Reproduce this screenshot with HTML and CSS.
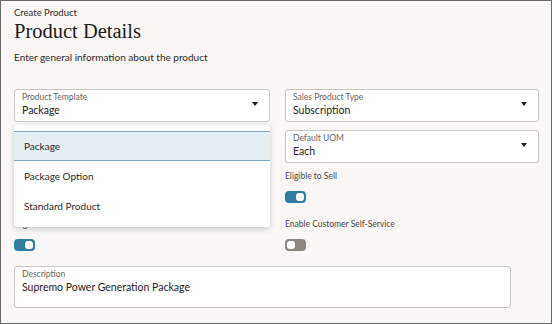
FILE: index.html
```html
<!DOCTYPE html>
<html lang="en">
<head>
  <meta charset="UTF-8" />
  <meta name="viewport" content="width=device-width, initial-scale=1.0"/>
  <title>Create Product</title>
  <link rel="stylesheet" href="styles.css">
</head>
<body>

  <div class="page">
    <div class="crumb">Create Product</div>
    <h1 class="title">Product Details</h1>
    <p class="intro">Enter general information about the product</p>

    <div class="form-grid">
      <div class="col">
        <div class="field select-field">
          <div class="field-label">Product Template</div>
          <div class="field-value">Package</div>
          <span class="arrow"></span>

          <ul class="menu">
            <li class="selected">Package</li>
            <li>Package Option</li>
            <li>Standard Product</li>
          </ul>
        </div>

        <!-- covered by the open menu -->
        <div class="field select-field">
          <span class="arrow"></span>
        </div>

        <div class="switch-row">
          <span class="switch on"></span>
        </div>

        <div class="switch-row">
          <div class="switch-label">Eligible to Purchase</div>
          <span class="switch on"></span>
        </div>
      </div>

      <div class="col">
        <div class="field select-field">
          <div class="field-label">Sales Product Type</div>
          <div class="field-value">Subscription</div>
          <span class="arrow"></span>
        </div>

        <div class="field select-field">
          <div class="field-label">Default UOM</div>
          <div class="field-value">Each</div>
          <span class="arrow"></span>
        </div>

        <div class="switch-row">
          <div class="switch-label">Eligible to Sell</div>
          <span class="switch on"></span>
        </div>

        <div class="switch-row">
          <div class="switch-label">Enable Customer Self-Service</div>
          <span class="switch"></span>
        </div>
      </div>
    </div>

    <div class="field description">
      <div class="field-label">Description</div>
      <div class="field-value">Supremo Power Generation Package</div>
    </div>
  </div>

</body>
</html>
```

FILE: styles.css
```css
* {
  box-sizing: border-box;
}
body {
  margin: 0;
  background: #ffffff;
  font-family: 'Lato', 'Noto Sans', sans-serif;
  color: #2b2926;
}
.page {
  width: 552px;
  height: 324px;
  border: 1px solid #6a6a6a;
  background: #f9f8f6;
  padding: 5px 13px 0 13px;
  overflow: hidden;
}
.crumb {
  font-size: 9.5px;
  line-height: 13px;
  color: #2b2926;
}
.title {
  font-family: 'Liberation Serif', serif;
  font-weight: normal;
  font-size: 20.5px;
  line-height: 24px;
  margin: 0;
  color: #1c1a18;
}
.intro {
  font-size: 10px;
  line-height: 14px;
  margin: 7px 0 0 0;
}
.form-grid {
  display: grid;
  grid-template-columns: 256px 254px;
  gap: 15px;
  margin-top: 25px;
}
.col {
  display: flex;
  flex-direction: column;
}
.field {
  position: relative;
  background: #ffffff;
  border: 1px solid #c9c6c2;
  border-radius: 3px;
  height: 33px;
  padding: 2px 7px 0 7px;
  margin-bottom: 8px;
}
.field-label {
  font-size: 8.5px;
  line-height: 11px;
  color: #6b6661;
}
.field-value {
  font-size: 10.5px;
  line-height: 15px;
  color: #1f1d1b;
}
.arrow {
  position: absolute;
  right: 11px;
  top: 12px;
  width: 0;
  height: 0;
  border-left: 3.5px solid transparent;
  border-right: 3.5px solid transparent;
  border-top: 4px solid #1f1d1b;
}
.menu {
  position: absolute;
  left: -1px;
  right: -1px;
  top: 35px;
  margin: 0;
  padding: 6px 0;
  list-style: none;
  background: #ffffff;
  border-radius: 2px;
  box-shadow: 0 2px 6px rgba(0, 0, 0, 0.18);
  z-index: 5;
}
.menu li {
  font-size: 10px;
  height: 30px;
  line-height: 30px;
  padding-left: 10px;
  color: #2b2926;
}
.menu li.selected {
  background: #e4eef3;
  border-top: 1px solid #79aac3;
  border-bottom: 1px solid #79aac3;
  line-height: 28px;
}
.switch-row {
  height: 48px;
}
.switch-label {
  font-size: 8.5px;
  line-height: 11px;
  color: #4a4541;
}
.switch {
  display: block;
  position: relative;
  width: 21px;
  height: 12px;
  margin-top: 20px;
  border-radius: 4px;
  background: #8c8781;
}
.switch-label + .switch {
  margin-top: 9px;
}
.switch::after {
  content: "";
  position: absolute;
  left: 2px;
  top: 2px;
  width: 8px;
  height: 8px;
  border-radius: 3px;
  background: #ffffff;
}
.switch.on {
  background: #2c7d9e;
}
.switch.on::after {
  left: 11px;
}
.description {
  width: 497px;
  height: 42px;
  margin-top: -1px;
}
```
